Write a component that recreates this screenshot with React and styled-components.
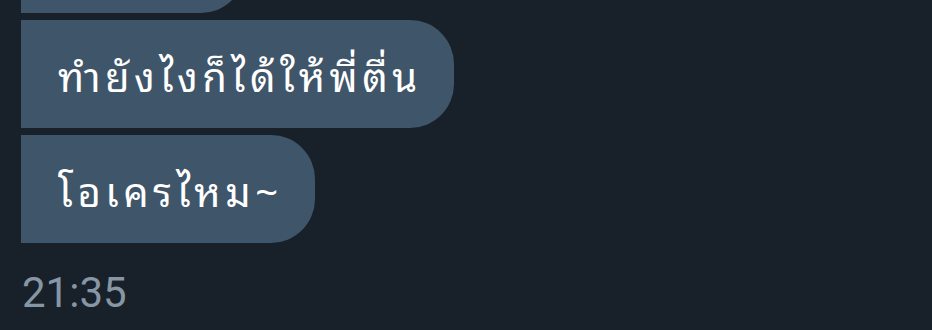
import React from "react";
import styled, { createGlobalStyle } from "styled-components";

const Global = createGlobalStyle`
  html, body { margin: 0; padding: 0; background: #18202a; }
  body { overflow: hidden; }
`;

const Chat = styled.div`
  width: 932px;
  height: 330px;
  overflow: hidden;
  background: #18202a;
  display: flex;
  flex-direction: column;
  align-items: flex-start;
  gap: 7px;
  padding-left: 21px;
  box-sizing: border-box;
`;

const Bubble = styled.div`
  box-sizing: border-box;
  height: 108px;
  display: flex;
  align-items: center;
  padding: 0 32px 0 37px;
  background: #3f5569;
  border-radius: 0 44px 44px 0;
  color: #ffffff;
  font-family: "Noto Sans Thai Looped", "Loma", "Noto Sans", sans-serif;
  font-size: 40px;
  letter-spacing: 4.5px;
  white-space: nowrap;
  margin-top: ${(p) => p.$offset || 0}px;
  width: ${(p) => (p.$width ? `${p.$width}px` : "auto")};
`;

const Time = styled.div`
  margin-top: 22px;
  margin-left: 1px;
  color: #8796a4;
  font-family: Roboto, "Liberation Sans", sans-serif;
  font-size: 42px;
  line-height: 1;
`;

export default function App() {
  return (
    <>
      <Global />
      <Chat>
        <Bubble $offset={-95} $width={224} />
        <Bubble>ทำยังไงก็ได้ให้พี่ตื่น</Bubble>
        <Bubble>โอเครไหม~</Bubble>
        <Time>21:35</Time>
      </Chat>
    </>
  );
}
